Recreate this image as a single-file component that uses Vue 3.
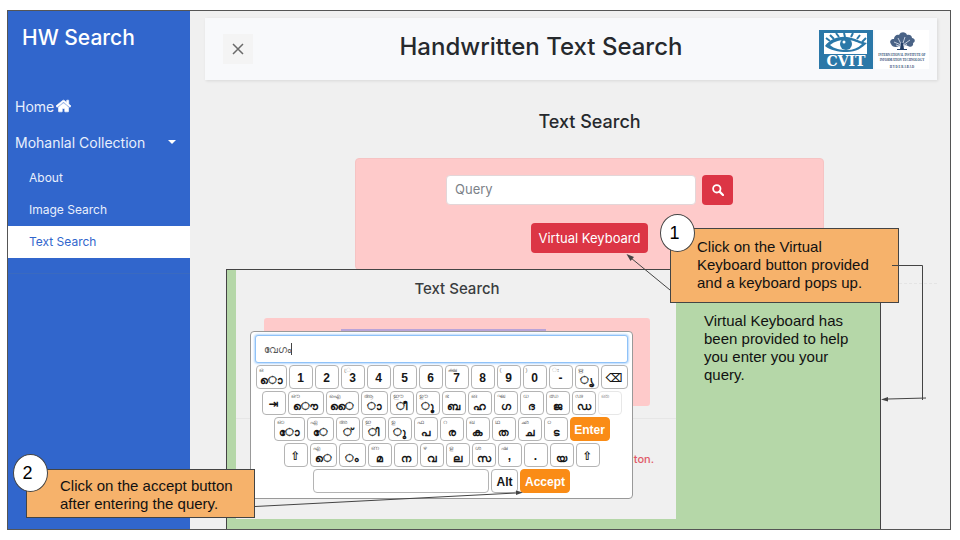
<script setup>
import { ref } from 'vue'

const query = ref('')
const typed = ref('വേഗം')

const rows = [
  [
    { t: '◌ൊ', s: 'ഒ', c: 'w31 ml' }, { t: '1' }, { t: '2' }, { t: '3', s: '◌്ര' }, { t: '4' }, { t: '5' }, { t: '6' },
    { t: '7', s: 'ക്ഷ' }, { t: '8' }, { t: '9', s: '(' }, { t: '0', s: ')' }, { t: '-', s: '◌ഃ' },
    { t: '◌ൃ', s: 'ഋ', c: 'ml' }, { t: '⌫', c: 'w27 glyph' },
  ],
  [
    { t: '⇥', c: 'glyph' }, { t: '◌ൌ', s: 'ഔ', c: 'w36 ml' }, { t: '◌ൈ', s: 'ഐ', c: 'w33 ml' }, { t: '◌ാ', s: 'ആ', c: 'w27 ml' },
    { t: '◌ീ', s: 'ഈ', c: 'ml' }, { t: '◌ൂ', s: 'ഊ', c: 'ml' }, { t: 'ബ', s: 'ഭ', c: 'ml' }, { t: 'ഹ', s: 'ങ', c: 'ml' }, { t: 'ഗ', s: 'ഘ', c: 'ml' },
    { t: 'ദ', s: 'ധ', c: 'ml' }, { t: 'ജ', s: 'ഝ', c: 'ml' }, { t: 'ഡ', s: 'ഢ', c: 'ml' }, { t: '', s: 'ഞ', c: 'faint' },
  ],
  [
    { t: '◌ോ', s: 'ഓ', c: 'w31 ml' }, { t: '◌േ', s: 'ഏ', c: 'w27 ml' }, { t: '◌്', s: 'അ', c: 'ml' }, { t: '◌ി', s: 'ഇ', c: 'ml' },
    { t: '◌ു', s: 'ഉ', c: 'ml' }, { t: 'പ', s: 'ഫ', c: 'ml' }, { t: 'ര', s: 'റ', c: 'ml' }, { t: 'ക', s: 'ഖ', c: 'ml' }, { t: 'ത', s: 'ഥ', c: 'ml' },
    { t: 'ച', s: 'ഛ', c: 'ml' }, { t: 'ട', s: 'ഠ', c: 'ml' }, { t: 'Enter', c: 'enter action' },
  ],
  [
    { t: '⇧', c: 'glyph' }, { t: '◌െ', s: 'എ', c: 'w27 ml' }, { t: '◌ം', c: 'w27 ml' }, { t: 'മ', s: 'ണ', c: 'ml' }, { t: 'ന', c: 'ml' },
    { t: 'വ', s: 'ഴ', c: 'ml' }, { t: 'ല', s: 'ള', c: 'ml' }, { t: 'സ', s: 'ശ', c: 'ml' }, { t: ',', s: 'ഷ' }, { t: '.' }, { t: 'യ', c: 'ml' },
    { t: '⇧', c: 'glyph' },
  ],
  [{ t: ' ', c: 'space' }, { t: 'Alt', c: 'w27' }, { t: 'Accept', c: 'accept action' }],
]
</script>

<template>
  <div class="page">
    <div class="slide">
      <nav class="sidebar">
        <h1>HW Search</h1>
        <a class="item" href="#">Home
          <svg class="home" viewBox="0 0 576 512"><path fill="currentColor" d="M280 148 96 300v164a16 16 0 0 0 16 16h112a16 16 0 0 0 16-16v-96a16 16 0 0 1 16-16h64a16 16 0 0 1 16 16v96a16 16 0 0 0 16 16h112a16 16 0 0 0 16-16V300L296 148a12 12 0 0 0-16 0zM572 251l-84-69V44a12 12 0 0 0-12-12h-56a12 12 0 0 0-12 12v73l-90-74a48 48 0 0 0-61 0L4 251a12 12 0 0 0-2 17l26 31a12 12 0 0 0 17 2l235-194a12 12 0 0 1 15 0l236 194a12 12 0 0 0 17-2l25-31a12 12 0 0 0-1-17z" stroke="currentColor" stroke-width="24" /></svg>
        </a>
        <a class="item drop" href="#">Mohanlal Collection <i class="caret"></i></a>
        <a class="sub" href="#">About</a>
        <a class="sub" href="#">Image Search</a>
        <a class="sub active" href="#">Text Search</a>
        <hr class="end">
      </nav>

      <main class="main">
        <header class="topbar">
          <button class="close" aria-label="Close menu">
            <svg viewBox="0 0 12 12"><path d="M1 1 11 11M11 1 1 11" stroke="#6a6a6a" stroke-width="1.5" /></svg>
          </button>
          <h2>Handwritten Text Search</h2>
          <div class="logos">
            <svg class="logo" viewBox="0 0 54 39">
              <rect width="54" height="39" fill="#2b78a8" />
              <rect x="5" y="3" width="43" height="21" fill="#fff" />
              <path d="M6 16C11 9 20 6 28 7S42 12 48 13C43 18 37 22 28 22S11 20 6 16Z" fill="#2b78a8" />
              <path d="M11 15C16 11 21 10 28 10S39 13 43 14C39 18 34 20 28 20S15 19 11 15Z" fill="#fff" />
              <circle cx="27" cy="14" r="6" fill="#2b78a8" /><circle cx="25" cy="12" r="1.5" fill="#fff" />
              <path d="M11 11 7 8M15 9 11 5M20 7 17 3M26 7 25 3M32 7 34 3M38 9 41 5M43 12 47 8" stroke="#2b78a8" stroke-width="2" />
              <text x="27" y="36" text-anchor="middle" class="cvit">CVIT</text>
            </svg>
            <svg class="logo" viewBox="0 0 54 39">
              <rect width="54" height="39" fill="#fff" />
              <path d="M16 14c-2-3 0-5 3-5 0-3 3-5 5-4 2-4 7-3 8 0 3-1 5 1 5 3 3 0 4 4 1 5 1 3-3 5-5 3l-5-2-4 2c-3 2-7 1-8-2Z" fill="#4a6386" />
              <path d="M19 12l7 3M23 8l4 8M30 7l-3 9M35 10l-7 5M32 14l-4 3M21 15l6 2" stroke="#c4cede" />
              <path d="M26 13h2l1 6h-4ZM22 19h10v1H22Z" fill="#243f66" />
              <text x="27" y="26" text-anchor="middle" class="iiit">INTERNATIONAL INSTITUTE OF</text>
              <text x="27" y="31" text-anchor="middle" class="iiit">INFORMATION TECHNOLOGY</text>
              <text x="27" y="38" text-anchor="middle" class="iiit">H Y D E R A B A D</text>
            </svg>
          </div>
        </header>

        <section class="search">
          <h3>Text Search</h3>
          <form class="card" @submit.prevent>
            <div class="line">
              <input v-model="query" class="query" type="text" placeholder="Query" aria-label="Query">
              <button class="red go" aria-label="Search">
                <svg viewBox="0 0 12 12"><circle cx="4.8" cy="4.8" r="3.7" fill="none" stroke="#fff" stroke-width="1.8" /><path d="M7.6 7.6 11 11" stroke="#fff" stroke-width="2.2" stroke-linecap="round" /></svg>
              </button>
            </div>
            <button class="red vk" type="button">Virtual Keyboard</button>
          </form>
        </section>
        <hr class="rule">
      </main>

      <section class="inset">
        <div class="shot">
          <h3>Text Search</h3>
          <div class="backcard"><span class="backfield"></span></div>
          <hr class="backrule">
          <p class="tail">ton.</p>
          <div class="keyboard">
            <div class="typed">
              <input v-model="typed" type="text" aria-label="Typed text">
              <i class="cursor"></i>
            </div>
            <div v-for="(row, r) in rows" :key="r" class="row">
              <button v-for="(k, i) in row" :key="i" class="key" :class="k.c" :aria-label="k.t === ' ' ? 'Space' : null">
                <small v-if="k.s">{{ k.s }}</small>{{ k.t }}
              </button>
            </div>
          </div>
        </div>
        <p class="note">Virtual Keyboard has been provided to help you enter you your query.</p>
      </section>

      <p class="callout first">Click on the Virtual Keyboard button provided and a keyboard pops up.</p>
      <p class="callout second">Click on the accept button after entering the query.</p>
      <svg class="arrows" viewBox="0 0 960 540" width="960" height="540">
        <g fill="none" stroke="#444">
          <path d="M670 290 631 258" />
          <path d="M892 265.500H922.500V400M926 398 888 399" />
          <path d="M255 506.500 516 493" />
        </g>
        <g fill="#444">
          <path d="M626.500 254 634 257 630.500 261Z" />
          <path d="M881 399.500 888 397V401.500Z" />
          <path d="M523 492.500 516 490.500V495Z" />
        </g>
      </svg>
      <span class="badge one">1</span>
      <span class="badge two">2</span>
    </div>
  </div>
</template>

<style>
body { background: #fff; }
</style>

<style scoped>
* { box-sizing: border-box; }
h1, h2, h3, p { margin: 0; font-weight: 500; }
button, input { font: inherit; }
a { color: inherit; text-decoration: none; }
.page { padding: 10px 9px 10px 7px; font-family: Inter, "Noto Sans", sans-serif; color: #26292d; }
.slide { position: relative; display: flex; min-height: 520px; background: #f0f0f0; border: 1px solid #555; }

.sidebar { flex: 0 0 182px; background: #3166cc; color: #e8effc; }
.sidebar h1 { padding: 12px 14px 35px; font-size: 21px; line-height: 30px; color: #fff; }
.item { display: flex; align-items: center; gap: 2px; height: 36px; padding: 0 14px 0 7px; font-size: 14px; }
.home { width: 15px; height: 14px; color: #fff; }
.drop { justify-content: space-between; margin-bottom: 2px; }
.caret { border: 4px solid transparent; border-top-color: #fff; border-bottom: 0; }
.sub { display: flex; align-items: center; height: 32px; padding: 0 0 2px 21px; font-size: 12px; }
.active { background: #fff; color: #3166cc; }
.end { margin: 15px 0 0; border: 0; border-top: 1px solid #3a6ac0; }

.main { flex: 1; min-width: 0; padding: 7px 13px 0 15px; }
.topbar { display: flex; align-items: center; justify-content: space-between; height: 62px; padding: 0 8px 0 18px; background: #f8f9fb; box-shadow: 1px 1px 3px #0000001a; }
.close { display: grid; place-items: center; width: 30px; height: 30px; padding: 0; border: 0; background: #f4f4f4; }
.close svg { width: 12px; height: 12px; }
.topbar h2 { font-size: 24px; line-height: 30px; padding: 0 0 4px 10px; }
.logos { display: flex; gap: 2px; }
.logo { width: 54px; height: 39px; }
.cvit { font: bold 14px "DejaVu Serif", serif; fill: #fff; }
.iiit { font: bold 3px "Liberation Serif", serif; fill: #2f4a72; }

.search { padding: 29px 113px 0 150px; }
.search h3 { font-size: 18px; line-height: 26px; text-align: center; }
.card { display: flex; flex-direction: column; align-items: center; gap: 18px; height: 112px; margin-top: 23px; padding-top: 16px; background: #fecaca; border: 1px solid #f6c3c3; border-radius: 4px; }
.line { display: flex; gap: 6px; }
.query { width: 250px; height: 30px; padding: 0 8px 2px; border: 1px solid #e3d6d8; border-radius: 4px; background: #fff; font-size: 13px; }
.query::placeholder { color: #7b8188; opacity: 1; }
.red { display: grid; place-items: center; height: 30px; padding: 0; border: 0; border-radius: 4px; background: #dc3545; color: #fff; font-size: 13px; }
.go { width: 31px; }
.go svg { width: 12px; height: 12px; }
.vk { width: 117px; }
.rule { margin: 13px 0 0 150px; border: 0; border-top: 1px dashed #e4e4e4; }

.inset { position: absolute; left: 218px; top: 258px; width: 655px; bottom: 0; display: flex; gap: 28px; padding: 0 0 10px 9px; background: #b5d7a8; border: 1px solid #444; border-bottom: 0; }
.shot { position: relative; flex: 0 0 440px; padding: 6px 26px 0 28px; background: #f0f0f0; }
.shot h3 { font-size: 15px; line-height: 26px; text-align: center; color: #3a3d40; }
.backcard { height: 88px; margin-top: 16px; padding-right: 28px; background: #fecaca; border-radius: 3px; }
.backfield { display: block; width: 205px; margin: 0 auto; padding-top: 11px; border-bottom: 2px solid #b9a3d8; }
.backrule { margin: 12px -26px 0 -28px; border: 0; border-top: 1px solid #e6e6e6; }
.tail { margin: 31px -4px 0 0; font-size: 11px; line-height: 18px; text-align: right; color: #e05a68; }
.keyboard { position: absolute; left: 14px; top: 61px; width: 383px; height: 168px; padding: 3px 4px; display: flex; flex-direction: column; gap: 2px; background: #fff; border: 1px solid #999; border-radius: 4px; }
.typed { position: relative; height: 28px; }
.typed input { width: 100%; height: 28px; padding: 0 8px; border: 1px solid #8fc2f8; border-radius: 3px; outline: 0; box-shadow: 0 0 2px 1px #b9dafd; font-size: 10px; color: #555; }
.cursor { position: absolute; left: 36px; top: 8px; height: 12px; border-left: 1px solid #444; }
.row { display: flex; justify-content: center; gap: 2px; }
.key { position: relative; flex: 0 0 24px; height: 24px; padding: 2px 0 0; border: 1px solid #b4b4b4; border-radius: 4px; background: #fff; color: #161616; font: bold 12px "Liberation Sans", "DejaVu Sans", "Noto Sans", sans-serif; white-space: nowrap; }
.key small { position: absolute; left: 2px; top: 0; font-size: 6px; line-height: 8px; font-weight: 400; color: #777; }
.key.ml { padding-top: 5px; font-size: 11px; line-height: 12px; }
.key.w27 { flex-basis: 27px; }
.key.w31 { flex-basis: 31px; }
.key.w33 { flex-basis: 33px; }
.key.w36 { flex-basis: 36px; }
.key.space { flex-basis: 176px; }
.key.enter { flex-basis: 40px; }
.key.accept { flex-basis: 50px; }
.key.action { background: #fa8c16; border-color: #fa8c16; color: #fff; }
.key.faint { border-color: #ddd; opacity: .7; }
.key.glyph { font-family: "DejaVu Sans", sans-serif; }
.note { width: 145px; padding-top: 42px; font: 15px/18px "Liberation Sans", sans-serif; color: #111; }

.callout { position: absolute; background: #f6b26b; border: 1px solid #444; font: 15px/18px "Liberation Sans", sans-serif; color: #111; }
.first { left: 662px; top: 217px; width: 229px; height: 75px; padding: 9px 26px 0; }
.second { left: 18px; top: 458px; width: 229px; height: 49px; padding: 7px 20px 0 33px; }
.arrows { position: absolute; left: -8px; top: -11px; pointer-events: none; }
.badge { position: absolute; width: 35px; height: 38px; padding-right: 6px; background: #fff; border: 1px solid #444; border-radius: 50%; font: 18px/36px "Liberation Sans", sans-serif; color: #000; text-align: center; }
.one { left: 652px; top: 203px; }
.two { left: 5px; top: 443px; }
</style>
